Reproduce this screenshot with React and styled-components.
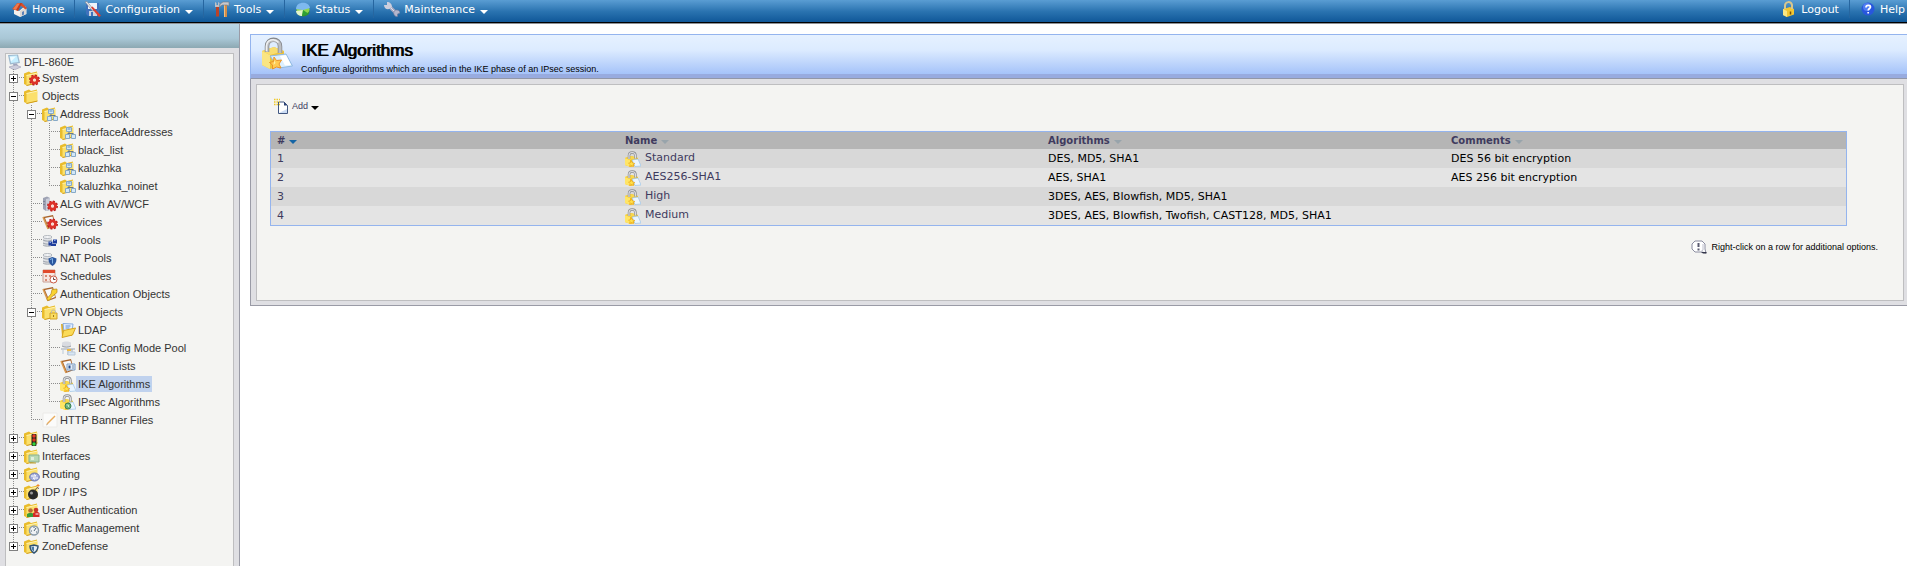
import { useState } from 'react';
import styled, { createGlobalStyle } from 'styled-components';

const columns = [
    { label: '#', width: 348, sorted: true },
    { label: 'Name', width: 423 },
    { label: 'Algorithms', width: 403 },
    { label: 'Comments', width: 401 },
];

const algorithms = [
    { name: 'Standard', list: 'DES, MD5, SHA1', comment: 'DES 56 bit encryption' },
    { name: 'AES256-SHA1', list: 'AES, SHA1', comment: 'AES 256 bit encryption' },
    { name: 'High', list: '3DES, AES, Blowfish, MD5, SHA1', comment: '' },
    { name: 'Medium', list: '3DES, AES, Blowfish, Twofish, CAST128, MD5, SHA1', comment: '' },
];

const tree = [
    { label: 'System', icon: 'system', children: [] },
    { label: 'Objects', icon: 'folder', open: true, children: [
        { label: 'Address Book', icon: 'address', open: true, children: [
            { label: 'InterfaceAddresses', icon: 'address' },
            { label: 'black_list', icon: 'address' },
            { label: 'kaluzhka', icon: 'address' },
            { label: 'kaluzhka_noinet', icon: 'address' },
        ] },
        { label: 'ALG with AV/WCF', icon: 'alg' },
        { label: 'Services', icon: 'services' },
        { label: 'IP Pools', icon: 'ipPool' },
        { label: 'NAT Pools', icon: 'natPool' },
        { label: 'Schedules', icon: 'schedule' },
        { label: 'Authentication Objects', icon: 'auth' },
        { label: 'VPN Objects', icon: 'vpn', open: true, children: [
            { label: 'LDAP', icon: 'ldap' },
            { label: 'IKE Config Mode Pool', icon: 'configPool' },
            { label: 'IKE ID Lists', icon: 'idList' },
            { label: 'IKE Algorithms', icon: 'lock' },
            { label: 'IPsec Algorithms', icon: 'ipsec' },
        ] },
        { label: 'HTTP Banner Files', icon: 'banner' },
    ] },
    { label: 'Rules', icon: 'rules', children: [] },
    { label: 'Interfaces', icon: 'interfaces', children: [] },
    { label: 'Routing', icon: 'routing', children: [] },
    { label: 'IDP / IPS', icon: 'bomb', children: [] },
    { label: 'User Authentication', icon: 'users', children: [] },
    { label: 'Traffic Management', icon: 'traffic', children: [] },
    { label: 'ZoneDefense', icon: 'zone', children: [] },
];

const folder = (
    <>
        <path d="M0 3.500 5 1.500 7 3 13 1.500v12L3 15.500 0 14z" fill="#e9bc2c" />
        <path d="M2.500 5.500 13.500 3V13L2.500 15.500z" fill="#fbe06c" />
        <path d="M2.500 5.500 13.500 3" stroke="#fff4b8" fill="none" />
        <path d="M2.500 15.500 13.500 13" stroke="#d09a16" fill="none" />
    </>
);

const gear = (
    <>
        <circle cx="10.500" cy="10" r="4.500" fill="none" stroke="#b81c1c" strokeWidth="2" strokeDasharray="2 1.500" />
        <circle cx="10.500" cy="10" r="3" fill="none" stroke="#dd3128" strokeWidth="3" />
        <circle cx="10.500" cy="10" r="1.500" fill="#f8d9d0" />
    </>
);

const disks = (
    <>
        <path d="M1 5v8c0 1.500 9 1.500 9 0V5z" fill="#dfe1e5" />
        <path d="M1 8c2 1.500 7 1.500 9 0M1 11c2 1.500 7 1.500 9 0M1 13c1 1.500 8 1.500 9 0" stroke="#9aa0a8" fill="none" />
        <ellipse cx="5.500" cy="5" rx="4.500" ry="1.500" fill="#f4f5f7" stroke="#b3b8be" />
    </>
);

const clipboard = (
    <>
        <path d="M1 3 11 1l3 11-8 3z" fill="#a8642c" />
        <path d="M3 4l7.500-1.500L13 11l-6 2.500z" fill="#f7f8fb" />
        <path d="M1 3l5 12" stroke="#d99a52" strokeWidth="1.500" />
    </>
);

const padlock = (
    <>
        <path d="M0 7 6 5l7 2v7l-7 2-6-2z" fill="#f0bd1c" />
        <path d="M0 7l5 2v7l-5-2z" fill="#ffe566" />
        <path d="M0 7l6-2 7 2-8 2z" fill="#f9d74c" />
        <path d="M4 8V4.500c0-4 6.500-4 6.500 0v3" fill="none" stroke="#8b8d91" strokeWidth="2.500" />
        <path d="M4 8V4.500c0-4 6-4 6.500 0v3" fill="none" stroke="#dcdde0" strokeWidth="1.200" />
    </>
);

const drawings = {
    folder,
    system: <>{folder}{gear}</>,
    address: (
        <>
            {folder}
            <path d="M6.500 3.500h5v4h-5zM5.500 10.500h4v4h-4zM11.500 10.500h4v4h-4z" fill="#d3e8f8" stroke="#86a9c6" />
            <path d="M9 8v2M7.500 9.500h6" stroke="#6b7784" />
            <path d="M7.500 5h3" stroke="#5f8fc0" />
        </>
    ),
    alg: (
        <>
            <path d="M1 2l4-1.500L8 2v12l-4 1-3-2z" fill="#9ea2b3" />
            <path d="M4 3l4-1v12l-4 1z" fill="#c9ccd8" />
            <path d="M2 5v1M2 8v1" stroke="#5d6277" />
            {gear}
        </>
    ),
    services: <>{clipboard}{gear}</>,
    ipPool: (
        <>
            {disks}
            <path d="M6.500 9.500h4v4h-4zM11 7.500h4v4h-4zM9 12h5v2H9z" fill="#1f3e9c" />
            <path d="M7.500 10.500h1.500M12 8.500h1.500" stroke="#89a4ef" />
        </>
    ),
    natPool: (
        <>
            {disks}
            <path d="M6.500 8.500l4-1.500 4 1.500c0 4-1.500 6-4 7.500-2.500-1.500-4-3.500-4-7.500z" fill="#2a579f" />
            <path d="M8 9.500l2.500-1v5" fill="none" stroke="#7eb0e6" />
        </>
    ),
    schedule: (
        <>
            <path d="M1 2h12v12H1z" fill="#f7e5df" stroke="#c8a095" />
            <path d="M1 2h12v3H1z" fill="#e04a2c" />
            <path d="M3 7h2v2H3zM7 7h2v2H7zM3 11h2v2H3z" fill="#d98b76" />
            <circle cx="11.500" cy="11.500" r="3.500" fill="#fff" stroke="#c95a44" />
            <path d="M11.500 9.500v2h2" fill="none" stroke="#6c3b35" />
        </>
    ),
    auth: (
        <>
            {clipboard}
            <path d="M15 3 10 3.500 9 8l-4 4.500.5 2 3-1 .5-2 3-2.500 3-2.500z" fill="#f9d332" stroke="#b88710" strokeWidth=".7" />
        </>
    ),
    vpn: (
        <>
            {folder}
            <path d="M8 9h7v6H8z" fill="#f9dc62" stroke="#d2a326" />
            <path d="M9.500 9V7.500c0-2 4-2 4 0V9" fill="none" stroke="#b5b5b5" />
            <path d="M11.500 11v2" stroke="#a07a1b" />
        </>
    ),
    ldap: (
        <>
            <path d="M1 2h5l1 2h5v10H2z" fill="#dcae2c" />
            <path d="M3 1.500l10 .5-1 8H4z" fill="#e5efff" stroke="#89aee0" />
            <path d="M5.500 4h5M5.500 6h4" stroke="#5d8fd2" />
            <path d="M3.500 8.500 15.500 6 12.500 13 2 15.500z" fill="#fbdb58" stroke="#d6a31d" />
        </>
    ),
    configPool: (
        <>
            <path d="M2 3c0-2 9-2 9 0v3c0 1.500-9 1.500-9 0z" fill="#d9dbe0" />
            <path d="M2 6c2 1.500 7 1.500 9 0" stroke="#999fa8" fill="none" />
            <path d="M1 9h14M8 9v6M12 9v4" stroke="#9ba4b0" />
            <path d="M7 9h4v2H7z" fill="#f0b93f" />
            <path d="M3 10v4M8 12h7v3H8z" fill="#d7e6f4" stroke="#bac9d8" />
        </>
    ),
    idList: (
        <>
            {clipboard}
            <path d="M7 6h8v6H7z" fill="#e3edf8" stroke="#7b9dc5" />
            <path d="M8.500 7.500h2v3h-2z" fill="#24498b" />
            <path d="M12 8h2M12 10h2" stroke="#7890b0" />
        </>
    ),
    lock: (
        <>
            {padlock}
            <path d="M7 9l6-1 3 7-6 .5z" fill="#eaf5ff" stroke="#9cc4e6" strokeWidth=".7" />
            <path d="M6.500 10l1 2 2.500.5-2 1 .5 2-2-1-2 1 .5-2-1.500-1.500 2-.3z" fill="#ffe24d" stroke="#eca31a" strokeWidth=".6" />
        </>
    ),
    ipsec: (
        <>
            {padlock}
            <path d="M9 8.500l4-.5 3 7-7 .5z" fill="#eaf5ff" stroke="#9cc4e6" strokeWidth=".7" />
            <circle cx="8" cy="12" r="3" fill="#6db07a" stroke="#3c8455" />
            <path d="M6.500 11h2v2" stroke="#c1ecc8" fill="none" />
        </>
    ),
    banner: (
        <>
            <path d="M1 1h14v14H1z" fill="#fbfbfa" stroke="#ecebe8" />
            <path d="M5 12 13 4" stroke="#e9ac5c" strokeWidth="1.500" />
            <path d="M4 13l2-1" stroke="#c9b79f" />
        </>
    ),
    rules: (
        <>
            {folder}
            <rect x="7.500" y="4" width="5" height="12" rx="1" fill="#2b2620" />
            <circle cx="10" cy="6" r="1.700" fill="#ee3a26" />
            <circle cx="10" cy="10" r="1.700" fill="#e0321f" />
            <circle cx="10" cy="14" r="1.700" fill="#32d43b" />
        </>
    ),
    interfaces: (
        <>
            {folder}
            <path d="M5 7h10v7H5z" fill="#b7d8b4" stroke="#8ab08e" />
            <path d="M7 9h3v3H7z" fill="#e0efde" />
            <path d="M7 14v2M9 14v2M11 14v2" stroke="#c19d2e" />
        </>
    ),
    routing: (
        <>
            {folder}
            <ellipse cx="10.500" cy="11" rx="4.800" ry="4" fill="#a8b1dd" stroke="#6472b0" />
            <path d="M7 10h5l-2-1.500M14 12H9l2 1.500" stroke="#fff" fill="none" />
        </>
    ),
    bomb: (
        <>
            {folder}
            <circle cx="9" cy="10.500" r="5" fill="#292929" />
            <circle cx="7.500" cy="9" r="1.500" fill="#9a9a9a" />
            <path d="M11 6.500l2-3 2 1" fill="none" stroke="#6e5a42" />
            <path d="M14 0v3M12.500 1.500h3" stroke="#f18a27" />
        </>
    ),
    users: (
        <>
            {folder}
            <path d="M3 15v-3l2-1h3l2 1v3z" fill="#3b9c37" />
            <path d="M9 15v-4l2-1h3l1.500 1v4z" fill="#d52b25" />
            <circle cx="6.500" cy="8.500" r="2.300" fill="#b86b34" />
            <circle cx="12" cy="8" r="2.300" fill="#c83628" />
            <path d="M11.500 12h3" stroke="#fff" />
        </>
    ),
    traffic: (
        <>
            {folder}
            <circle cx="10" cy="10.500" r="4.500" fill="#eef1f4" stroke="#8a9ba9" strokeWidth="1.500" />
            <path d="M12 8l-2 3M7 11h1M10 7v1M12 12h1" stroke="#4f6473" />
        </>
    ),
    zone: (
        <>
            {folder}
            <path d="M6 8l4-1 4 1c0 3.500-1.500 5.500-4 7-2.500-1.500-4-3.500-4-7z" fill="#e7eff6" stroke="#315474" strokeWidth="1.500" />
            <path d="M10 8.500v5c-2-1-2.500-3-2.500-4.500z" fill="#4778a4" />
        </>
    ),
    computer: (
        <>
            <path d="M1 1l10-.5 2 8.500-10 1.500z" fill="#9eb9cf" />
            <path d="M2.500 2l7.500-.5 1.500 6.500-7.500 1z" fill="#c5eeff" />
            <path d="M3 3l6-.5-5 5z" fill="#effbff" />
            <path d="M6 10l4-.5 1 2.500-4 1z" fill="#9fa4bd" />
            <path d="M2 13l7-2 5 2-7 3z" fill="#cdcedd" stroke="#a5a5ba" strokeWidth=".7" />
        </>
    ),
    home: (
        <>
            <path d="M2 8l5 2 6-5 1.500 3v5L8 16l-6-3z" fill="#f4f1ed" />
            <path d="M8 10l6-4v7l-6 3z" fill="#dcd8d4" />
            <path d="M0 8l5-5.500 5-.5 5 5-1.500 1.500-5-4L6 10z" fill="#d9502a" />
            <path d="M5 2.500l5-.5-4 7.500L1 8z" fill="#c23c1e" />
            <path d="M5 2.500l3-.3-4 6.800-3-1z" fill="#ee7a4c" />
            <path d="M10 11l2-1v3.500l-2 1z" fill="#5c82b8" />
        </>
    ),
    configuration: (
        <>
            <path d="M1 2h13v13H3l-2-2z" fill="#3f72bd" />
            <path d="M3 2h9v6H3z" fill="#edf2fa" />
            <path d="M4 10h8v5H4z" fill="#c8d2e0" />
            <path d="M6 11h2v4H6z" fill="#3f72bd" />
            <path d="M0 1l2-.5 7 8.500-1.500 1z" fill="#e3e5ea" stroke="#80848e" strokeWidth=".6" />
            <path d="M6 6.500l1.500-1 8.500 9-2 1.500z" fill="#dd3d2f" />
        </>
    ),
    tools: (
        <>
            <path d="M2 5h3v10.500H2z" fill="#ba4228" />
            <path d="M1 1l1.500 1v2H4V1l1.500 1v4H1z" fill="#bcc1c8" />
            <path d="M10 4h3v12h-3z" fill="#d58d48" />
            <path d="M10 4h1v12h-1z" fill="#f1bf80" />
            <path d="M6 3l3-2h6v4l-2-1H8L6 6z" fill="#c7c9cf" stroke="#77797f" strokeWidth=".6" />
        </>
    ),
    status: (
        <>
            <ellipse cx="8" cy="10.500" rx="6.500" ry="5" fill="#378d2c" />
            <ellipse cx="8" cy="8.500" rx="6.500" ry="5" fill="#8fd84a" />
            <path d="M8 9 1 8c0-8 13-8 14-1z" fill="#7eb9ef" />
            <path d="M8 9l-7 1c0 3 3 5 6 5z" fill="#e4f4cc" />
            <path d="M8 9l6 4-7 2z" fill="#2fa034" />
        </>
    ),
    maintenance: (
        <>
            <path d="M4 4l8 8" stroke="#a6a9c1" strokeWidth="3.500" />
            <path d="M4 4l8 8" stroke="#dfe1ee" />
            <path d="M3 1v3H0c0 4 4 5 6 3.500l2-1.500c0-3-2-5-5-5z" fill="#cccedd" />
            <path d="M16 12c0-3-4-4-5.500-2-2 2 0 6 3 5.500V13z" fill="#b4b6cd" stroke="#747798" strokeWidth=".6" />
        </>
    ),
    logout: (
        <>
            <path d="M2 8l7-2 4 2v5.500L6 16l-4-2z" fill="#f2c633" />
            <path d="M2 8l4 2v6l-4-2z" fill="#fbe784" />
            <path d="M4 8V5c0-5 6-5 7-1v4" fill="none" stroke="#d9c78d" strokeWidth="2" />
            <path d="M9.500 10.500v3" stroke="#765008" strokeWidth="1.500" />
        </>
    ),
    help: (
        <>
            <circle cx="8" cy="8" r="6.500" fill="#2857dc" />
            <circle cx="7" cy="6" r="4" fill="#4f7cf2" />
            <path d="M6 6.500c0-3 4.500-2.500 4.500-.5C10.500 7.500 8.200 7.500 8.200 9.500M8.200 11v1.500" fill="none" stroke="#fff" strokeWidth="1.700" />
        </>
    ),
    add: (
        <>
            <path d="M4.500 4h5.500L13.500 7.500V15.500H4.500z" fill="#fff" stroke="#415781" />
            <path d="M5 15h8V11z" fill="#cbdcf4" />
            <path d="M10 4v3.500H13.500z" fill="#2e4577" />
            <path d="M0 1.500h6M0 4h6M0 6.500h6" stroke="#f0c92a" strokeWidth="1.500" strokeDasharray="1.500 1" />
        </>
    ),
    hint: (
        <>
            <path d="M4 2h7l3 3v5l1 4-4-1H4l-3-3V5z" fill="#fff" stroke="#8a8ca0" />
            <path d="M10 13h5.500v1.500H12z" fill="#33354a" />
            <path d="M12 5v6l-2 1.500" fill="none" stroke="#bfc0ce" />
            <path d="M7.500 4v4M7.500 9.500v2" stroke="#5a5b70" strokeWidth="2" />
        </>
    ),
};

const Icon = ({ name }) => (
    <IconSvg viewBox="0 0 16 16" $size={16} aria-hidden="true">{drawings[name]}</IconSvg>
);

const BigLock = () => (
    <IconSvg viewBox="0 0 34 34" $size={34} aria-hidden="true">
        <path d="M1 14 13 10l10 4v13L9 32l-8-4z" fill="#efc43a" />
        <path d="M1 14l8 4v14l-8-4z" fill="#fae583" />
        <path d="M1 14 13 10l10 4-14 4z" fill="#f8dd70" />
        <path d="M6 15V9.500c0-9 13-9 13 0V16" fill="none" stroke="#85878b" strokeWidth="4.500" />
        <path d="M6 15V9.500c0-8.500 13-8.500 13 0V16" fill="none" stroke="#bcbec2" strokeWidth="3" />
        <path d="M5.500 14V9.500c0-7 8-9 12-4" fill="none" stroke="#f0f1f3" strokeWidth="1.500" />
        <path d="M9 19l16-2 6.500 12L18 31z" fill="#dcefff" stroke="#8fb9e1" />
        <path d="M19 19l6-1 5 10-6 .5z" fill="#fff" />
        <path d="M13 20l2.500 3.500 5-.5-2.500 4 2 4-4.500-1-4 2v-4l-3-2.500 4-1z" fill="#ffca52" stroke="#ec9426" />
        <path d="M13.500 23l1 3-2 2z" fill="#fff0a8" />
    </IconSvg>
);

const Arrow = ({ color }) => (
    <ArrowSvg viewBox="0 0 8 4" aria-hidden="true"><path d="M0 0h8L4 4z" fill={color} /></ArrowSvg>
);

const TreeItem = ({ node, parents, last, selected, onSelect }) => {

    const [ open, setOpen ] = useState(Boolean(node.open));
    const children = node.children || [];

    return (
        <li>
            <TreeRow>
                {parents.map((line, i) => <Guide key={i} $line={line ? 'full' : 'none'} />)}
                <Guide $line={last ? 'half' : 'full'} $branch>
                    {node.children &&
                        <Toggle
                            type='button'
                            aria-label={(open ? 'Collapse ' : 'Expand ') + node.label}
                            onClick={() => setOpen(!open)}
                        >
                            <svg width="9" height="9" viewBox="0 0 9 9" shapeRendering="crispEdges">
                                <path d="M.5.5h8v8h-8z" fill="#fff" stroke="#808080" />
                                <path d={open ? 'M2 4.500h5' : 'M2 4.500h5M4.500 2v5'} stroke="#000" />
                            </svg>
                        </Toggle>
                    }
                </Guide>
                <TreeLink href={'#' + node.label} $selected={selected === node.label} onClick={() => onSelect(node.label)}>
                    <Icon name={node.icon} />
                    <span>{node.label}</span>
                </TreeLink>
            </TreeRow>
            {open && children.length > 0 &&
                <TreeList>
                    {children.map((child, i) => (
                        <TreeItem
                            key={child.label}
                            node={child}
                            parents={[...parents, !last]}
                            last={i === children.length - 1}
                            selected={selected}
                            onSelect={onSelect}
                        />
                    ))}
                </TreeList>
            }
        </li>
    )
}

const App = () => {

    const [ selected, setSelected ] = useState('IKE Algorithms');

    return (
        <Page>
            <GlobalStyle />
            <TopBar>
                <NavLink href="#home"><Icon name="home" />Home</NavLink>
                <NavButton type='button'><Icon name="configuration" />Configuration<Arrow color="#fff" /></NavButton>
                <NavButton type='button'><Icon name="tools" />Tools<Arrow color="#fff" /></NavButton>
                <NavButton type='button'><Icon name="status" />Status<Arrow color="#fff" /></NavButton>
                <NavButton type='button' $last><Icon name="maintenance" />Maintenance<Arrow color="#fff" /></NavButton>
                <Account>
                    <NavLink href="#logout"><Icon name="logout" />Logout</NavLink>
                    <NavLink href="#help" $last><Icon name="help" />Help</NavLink>
                </Account>
            </TopBar>
            <Columns>
                <Sidebar>
                    <SidebarStrip />
                    <TreePanel>
                        <RootLink href="#device"><Icon name="computer" />DFL-860E</RootLink>
                        <TreeList>
                            {tree.map((node, i) => (
                                <TreeItem
                                    key={node.label}
                                    node={node}
                                    parents={[]}
                                    last={i === tree.length - 1}
                                    selected={selected}
                                    onSelect={setSelected}
                                />
                            ))}
                        </TreeList>
                    </TreePanel>
                </Sidebar>
                <Main>
                    <Heading>
                        <BigLock />
                        <div>
                            <Title>IKE Algorithms</Title>
                            <Subtitle>Configure algorithms which are used in the IKE phase of an IPsec session.</Subtitle>
                        </div>
                    </Heading>
                    <Frame>
                        <Panel>
                            <AddButton type='button'><Icon name="add" />Add<Arrow color="#000" /></AddButton>
                            <Table>
                                <colgroup>
                                    {columns.map((column) => <Col key={column.label} $width={column.width} />)}
                                </colgroup>
                                <thead>
                                    <tr>
                                        {columns.map((column) => (
                                            <HeadCell key={column.label} scope="col">
                                                <SortButton type='button'>
                                                    {column.label}
                                                    <Arrow color={column.sorted ? '#1565a5' : '#98a4ab'} />
                                                </SortButton>
                                            </HeadCell>
                                        ))}
                                    </tr>
                                </thead>
                                <tbody>
                                    {algorithms.map((row, i) => (
                                        <Row key={row.name}>
                                            <Cell $muted>{i + 1}</Cell>
                                            <Cell>
                                                <NameLink href={'#' + row.name}><Icon name="lock" />{row.name}</NameLink>
                                            </Cell>
                                            <Cell>{row.list}</Cell>
                                            <Cell>{row.comment}</Cell>
                                        </Row>
                                    ))}
                                </tbody>
                            </Table>
                            <Hint><Icon name="hint" />Right-click on a row for additional options.</Hint>
                        </Panel>
                    </Frame>
                </Main>
            </Columns>
        </Page>
    )
}

const GlobalStyle = createGlobalStyle`
* {
    box-sizing: border-box;
}
body {
    margin: 0;
    background: #fff;
    font-family: "Liberation Sans", Arial, sans-serif;
    font-size: 11px;
    color: #000;
}
a, button {
    color: inherit;
    font: inherit;
    text-decoration: none;
}
button {
    padding: 0;
    border: 0;
    background: none;
    cursor: pointer;
}
`;

const IconSvg = styled.svg`
    display: block;
    flex: none;
    width: ${({ $size }) => $size}px;
    height: ${({ $size }) => $size}px;
`;

const ArrowSvg = styled.svg`
    display: block;
    flex: none;
    width: 8px;
    height: 4px;
    margin: 3px 0 0 1px;
`;

const Page = styled.div`
    display: flex;
    flex-direction: column;
    min-height: 100vh;
`;

const TopBar = styled.nav`
    display: flex;
    height: 24px;
    padding: 0 2px;
    background: linear-gradient(#5a9dd3, #2a73b0 50%, #0d5596);
    border-bottom: 1px solid #8d9196;
    box-shadow: inset 0 -1px #000;
    color: #fff;
    font-family: "DejaVu Sans", Verdana, sans-serif;
    font-size: 11px;
`;

const NavLink = styled.a`
    display: flex;
    align-items: center;
    gap: 4px;
    height: 18px;
    padding: 0 10px;
    border-right: ${({ $last }) => $last ? 0 : '1px solid #2666a0'};

    &:last-child {
        padding-right: 0;
    }
`;

const NavButton = styled(NavLink).attrs({ as: 'button' })`
    ${ArrowSvg} {
        margin-top: 6px;
    }
`;

const Account = styled.div`
    display: flex;
    margin-left: auto;
`;

const Columns = styled.div`
    display: flex;
    flex: 1;
`;

const Sidebar = styled.aside`
    display: flex;
    flex-direction: column;
    flex: none;
    width: 240px;
    background: #dfdfe3;
    border-right: 1px solid #9a9ba6;
`;

const SidebarStrip = styled.div`
    height: 24px;
    background: linear-gradient(#b9d6e7, #a9c7d6 60%, #8ca8b2);
`;

const TreePanel = styled.div`
    flex: 1;
    margin: 5px 5px 0;
    background: #f4f4f2;
    border: 1px solid #bebec0;
    border-bottom: 0;
    color: #333;
`;

const TreeList = styled.ul`
    margin: 0;
    padding: 0;
    list-style: none;
`;

const RootLink = styled.a`
    display: flex;
    align-items: center;
    gap: 1px;
    height: 15px;
    padding-left: 1px;
    line-height: 14px;
`;

const TreeRow = styled.div`
    display: flex;
    height: 18px;
`;

/* one 18px step of indentation with its dotted connectors */
const Guide = styled.span`
    display: flex;
    align-items: center;
    flex: none;
    width: 18px;
    padding-left: 3px;
    background-image:
        repeating-linear-gradient(#8c8c8c 0 1px, transparent 1px 2px),
        repeating-linear-gradient(90deg, #8c8c8c 0 1px, transparent 1px 2px);
    background-repeat: no-repeat;
    background-position: 7px 0, 7px 8px;
    background-size:
        ${({ $line }) => $line === 'none' ? '0 0' : $line === 'half' ? '1px 9px' : '1px 18px'},
        ${({ $branch }) => $branch ? '11px 1px' : '0 0'};
`;

const Toggle = styled.button`
    display: flex;
`;

const TreeLink = styled.a`
    display: flex;
    align-items: center;

    span {
        height: 16px;
        padding: 0 2px;
        line-height: 16px;
        background: ${({ $selected }) => $selected ? '#c0d2ee' : 'none'};
    }
`;

const Main = styled.main`
    flex: 1;
    min-width: 0;
    padding: 10px 0 0 10px;
`;

const Heading = styled.header`
    display: flex;
    gap: 6px;
    height: 45px;
    padding: 2px 0 0 10px;
    background: linear-gradient(#e6f1ff, #dcebff 35%, #9cbcf8);
    border-top: 1px solid #94b4ee;
    border-left: 1px solid #94b4ee;
    border-bottom: 1px solid #9297a8;
    box-shadow: inset 0 -4px #98abdf;
`;

const Title = styled.h1`
    margin: 4px 0 0;
    font-size: 17px;
    font-weight: normal;
    line-height: 20px;
    text-shadow: 1px 0 #000;
`;

const Subtitle = styled.p`
    margin: 0;
    font-size: 9px;
    line-height: 16px;
`;

const Frame = styled.div`
    padding: 5px 3px 4px 5px;
    background: #dfdfe3;
    border-left: 1px solid #9a9ba6;
    border-bottom: 1px solid #9a9ba6;
`;

const Panel = styled.section`
    padding: 13px 25px 45px 13px;
    background: #f4f4f2;
    border: 1px solid #bebec0;
`;

const AddButton = styled.button`
    display: flex;
    align-items: center;
    gap: 2px;
    height: 16px;
    margin: 0 0 17px 4px;
    color: #3f3b5e;
    font-size: 9px;
`;

const Table = styled.table`
    width: calc(100% - 31px);
    table-layout: fixed;
    border-collapse: separate;
    border-spacing: 0;
    border: 1px solid #94b4ee;
    font-family: "DejaVu Sans", Verdana, sans-serif;
`;

const Col = styled.col`
    width: ${({ $width }) => $width}px;
`;

const HeadCell = styled.th`
    height: 17px;
    padding: 0 6px;
    background: #b5b5b5;
    text-align: left;
`;

const SortButton = styled.button`
    display: flex;
    align-items: center;
    gap: 3px;
    color: #3f3b5e;
    font-size: 10px;
    font-weight: bold;
    line-height: 16px;
`;

const Row = styled.tr`
    background: #d8d8d8;

    &:nth-child(even) {
        background: #e4e4e4;
    }
`;

const Cell = styled.td`
    height: 19px;
    padding: 1px 6px 0;
    color: ${({ $muted }) => $muted ? '#3f3b5e' : '#000'};
    font-size: 11px;
    line-height: 14px;
`;

const NameLink = styled.a`
    display: flex;
    gap: 4px;
    color: #3f3b5e;
`;

const Hint = styled.p`
    display: flex;
    justify-content: flex-end;
    align-items: center;
    gap: 4px;
    height: 16px;
    margin: 13px 0 0;
    font-size: 9px;
`;

export default App
